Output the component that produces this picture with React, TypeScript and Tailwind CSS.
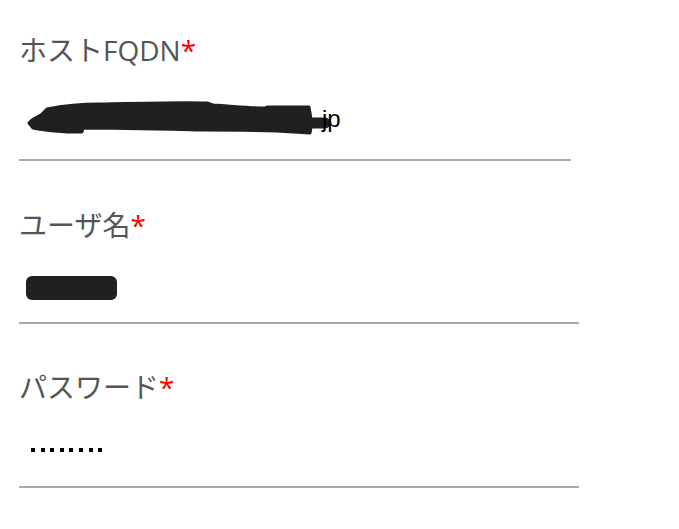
import React from 'react';

const Label = ({text}: {text: string}) => (
    <div className="text-[28px] leading-[40px] text-[#555]"
         style={{fontFamily: '"Open Sans", "Noto Sans CJK JP", sans-serif'}}>
        {text}<span className="text-[#f00]">*</span>
    </div>
);

// redaction scribble over the host name
const HostScribble = () => (
    <svg width="322" height="36" viewBox="0 0 322 36" className="block">
        <path
            d="M2 23 C5 19 10 17 14 15 L20 9 C40 5 60 4 73 4 C120 3 160 2 180 3 L186 5 C205 6 222 8 238 8 L240 7 L282 7 L284 19 L298 19 C303 19 303 27 298 27 L284 27 L283 33 L250 31 C220 30 200 30 173 30 C130 29 90 28 56 28 L55 32 L40 32 C28 31 15 30 6 28 Z"
            fill="#202020" stroke="#202020" strokeWidth="3" strokeLinejoin="round"/>
    </svg>
);

export default function App() {
    return (
        <div className="w-[679px] h-[529px] bg-white pl-[19px] pt-[30px]"
             style={{fontFamily: '"Liberation Sans", "Noto Sans CJK JP", sans-serif'}}>
            <div className="w-[552px]">
                <Label text="ホストFQDN"/>
                <div className="h-[89px] pt-[30px] pl-[8px]">
                    <div className="relative w-[322px]">
                        <HostScribble/>
                        <span className="absolute left-[295px] top-[7px] text-[24px] leading-none text-black">jp</span>
                    </div>
                </div>
                <div className="h-[2px] bg-[#aaa]"/>
            </div>

            <div className="w-[560px] mt-[44px]">
                <Label text="ユーザ名"/>
                <div className="h-[77px] pt-[31px] pl-[7px]">
                    <div className="w-[91px] h-[24px] bg-[#202020] rounded-[6px]"/>
                </div>
                <div className="h-[2px] bg-[#aaa]"/>
            </div>

            <div className="w-[560px] mt-[43px]">
                <Label text="パスワード"/>
                <div className="h-[79px] pt-[41px] pl-[12px]">
                    <div className="flex gap-[5.6px]">
                        {Array.from({length: 8}).map((_, i) => (
                            <div key={i} className="w-[4px] h-[4px] bg-black"/>
                        ))}
                    </div>
                </div>
                <div className="h-[2px] bg-[#aaa]"/>
            </div>
        </div>
    );
}
